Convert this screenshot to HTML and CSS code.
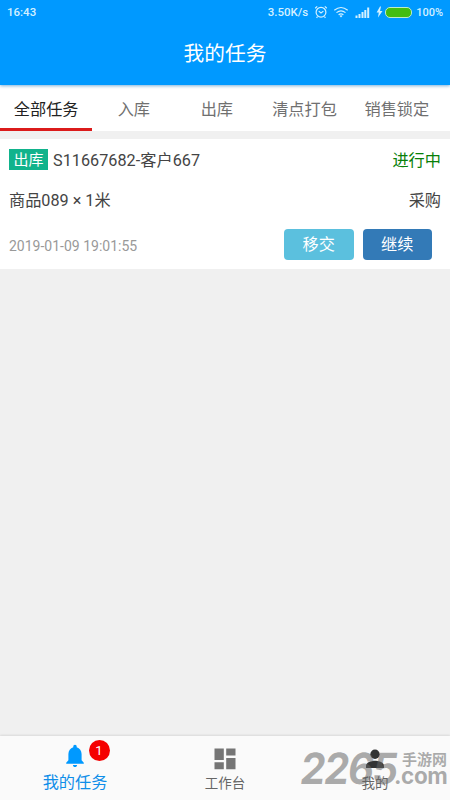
FILE: index.html
```html
<!DOCTYPE html>
<html lang="zh-CN">
<head>
<meta charset="utf-8">
<title>我的任务</title>
<link rel="stylesheet" href="styles.css">
</head>
<body>
<div class="app">
  <header class="header">
    <div class="status">
      <span class="clock">16:43</span>
      <span class="speed">3.50K/s</span>
      <svg class="alarm" width="14" height="14" viewBox="0 0 14 14"><circle cx="7" cy="7.2" r="4.9"/><path d="M1.2 3.2 3.2 1.4M12.8 3.2 10.8 1.4M4.7 6.1 7 8 9.4 6.1M3.5 11.5 2.6 12.8M10.5 11.5l.9 1.3"/></svg>
      <svg class="wifi" width="16" height="12" viewBox="0 0 16 12"><path d="M1.3 4.2Q8-1.2 14.7 4.2M3.5 6.6Q8 3 12.5 6.6M5.6 8.8Q8 7 10.4 8.8"/><path class="solid" d="M6.5 9.7Q8 8.8 9.5 9.7L8 11.4Z"/></svg>
      <svg class="signal" width="15" height="11" viewBox="0 0 15 11"><path d="M.5 8.5h2V11h-2zM3.5 7h2v4h-2zM6.5 5h2v6h-2zM9.3 3h2v8h-2zM12.2.5h2V11h-2z"/></svg>
      <svg class="bolt" width="7" height="12" viewBox="0 0 7 12"><path d="M4 .5.6 6.6h2.2L2 11.5l4.5-6.6H4L5 .5z"/></svg>
      <span class="battery"></span>
      <span class="percent">100%</span>
    </div>
    <h1 class="title">我的任务</h1>
  </header>
  <nav class="tabs">
    <a class="tab active">全部任务</a>
    <a class="tab">入库</a>
    <a class="tab">出库</a>
    <a class="tab">清点打包</a>
    <a class="tab">销售锁定</a>
  </nav>
  <main class="content">
    <article class="card">
      <div class="row order">
        <span class="name"><span class="tag">出库</span>S11667682-客户667</span>
        <span class="state">进行中</span>
      </div>
      <div class="row goods"><span>商品089 × 1米</span><span>采购</span></div>
      <div class="row foot">
        <time class="time">2019-01-09 19:01:55</time>
        <div class="actions"><button class="btn transfer">移交</button><button class="btn resume">继续</button></div>
      </div>
    </article>
  </main>
  <footer class="bottom">
    <a class="item current">
      <span class="icon"><svg width="20" height="24" viewBox="0 0 20 24"><path d="M10 .7c1 0 1.700.8 1.700 1.800v.7c3 .8 4.900 3.400 4.900 6.800v6.200l2.200 2.500v1H1.200v-1l2.200-2.500V10c0-3.400 1.900-6 4.900-6.800v-.7C8.300 1.500 9 .7 10 .7zM7.900 21h4.200c0 1.200-.9 2.100-2.100 2.100S7.900 22.200 7.900 21z"/></svg><span class="badge">1</span></span>
      <span class="label">我的任务</span>
    </a>
    <a class="item">
      <span class="icon"><svg width="22" height="22" viewBox="0 0 22 22"><path d="M.5.5h9.300v11.400H.5zM12.200.5h9.300v7H12.200zM.5 14.300h9.300v7H.5zM12.200 9.900h9.300v11.400H12.200z"/></svg></span>
      <span class="label">工作台</span>
    </a>
    <a class="item">
      <span class="icon"><svg width="20" height="20" viewBox="0 0 20 20"><circle cx="10" cy="5.300" r="4.700"/><path d="M1 19v-2.500c0-3 5.500-4.700 9-4.700s9 1.700 9 4.700V19z"/></svg></span>
      <span class="label">我的</span>
    </a>
    <div class="watermark"><span class="digits">2265</span><span class="site">手游网</span><span class="domain">.com</span></div>
  </footer>
</div>
</body>
</html>
```

FILE: styles.css
```css
* { box-sizing: border-box; }
body { margin: 0; font-family: Roboto, "Noto Sans CJK SC", sans-serif; color: #444; }
.app { width: 450px; height: 800px; display: flex; flex-direction: column; background: #f0f0f0; overflow: hidden; }
.header { height: 85px; flex: none; background: #0099ff; color: #fff; box-shadow: 0 1px 3px rgba(0,100,180,.5); position: relative; }
.status { height: 24px; display: flex; align-items: center; padding: 0 7px; font-size: 11px; font-weight: 500; color: #d3f0ff; }
.clock { font-size: 11.5px; }
.speed { margin-left: auto; font-size: 11.5px; }
.status svg { fill: none; stroke: #d3f0ff; stroke-width: 1.2; flex: none; }
.status .signal, .status .bolt, .status .solid { fill: #d3f0ff; stroke: none; }
.alarm { margin-left: 6px; }
.wifi { margin-left: 5px; }
.signal { margin-left: 6px; }
.bolt { margin-left: 6px; }
.battery { width: 27px; height: 11px; margin: 0 4px 0 2px; border: 1px solid #bdebc8; border-radius: 5px; background: #43bd12; flex: none; }
.title { margin: 0; height: 60px; line-height: 60px; font-size: 20.7px; font-weight: 400; text-align: center; }
.tabs { height: 46px; flex: none; display: flex; background: #fff; font-size: 16.2px; color: #707070; }
.tab { line-height: 49px; padding: 0 13.8px; min-width: 83px; flex: none; text-align: center; white-space: nowrap; height: 46px; }
.tab.active { color: #222; border-bottom: 3px solid #db1b1b; }
.content { flex: 1; padding-top: 8px; }
.card { height: 130px; padding: 0 9px; background: #fff; font-size: 16.2px; }
.row { display: flex; justify-content: space-between; align-items: center; }
.order { height: 40px; }
.name { display: flex; align-items: center; letter-spacing: .04px; }
.tag { width: 39px; height: 21px; margin-right: 5px; line-height: 22px; background: #11b38c; color: #fff; font-size: 15px; text-align: center; }
.state { color: #088008; }
.goods { height: 40px; }
.foot { height: 50px; }
.time { font-size: 14px; color: #999; padding-top: 3px; }
.actions { display: flex; gap: 9px; padding-right: 9px; }
.btn { width: 69.5px; height: 31px; padding: 0; border: 0; border-radius: 4px; color: #fff; font: 16.2px/32px Roboto, "Noto Sans CJK SC", sans-serif; }
.transfer { background: #5bc0de; }
.resume { background: #337ab7; }
.bottom { height: 64px; flex: none; display: flex; position: relative; background: #fafafa; box-shadow: 0 -1px 2px rgba(0,0,0,.1); }
.item { flex: 1; display: flex; flex-direction: column; align-items: center; color: #666; font-size: 13.5px; }
.icon { position: relative; height: 34px; padding-top: 8px; display: flex; align-items: center; justify-content: center; margin-top: 2px; }
.icon svg { fill: #757575; }
.label { line-height: 20px; margin-top: 1px; }
.current { color: #108ee9; font-size: 16.2px; }
.current .icon svg { fill: #0099ff; margin-top: -6px; }
.item:nth-child(3) svg { fill: #333; }
.badge { position: absolute; left: 23.5px; top: 2px; width: 21px; height: 21px; border-radius: 50%; background: #f50000; color: #fff; font-size: 13px; line-height: 21px; text-align: center; }
.watermark { position: absolute; left: 300px; top: 12px; width: 150px; height: 42px; color: rgba(100,100,100,.53); font-family: Inter, "Noto Sans CJK SC", sans-serif; font-weight: 700; white-space: nowrap; }
.digits { position: absolute; left: -2px; top: -1px; font-size: 43px; line-height: 42px; letter-spacing: -1.5px; transform: skewX(-8deg) scaleX(.93); transform-origin: left bottom; }
.site { position: absolute; left: 102px; top: 4px; font-size: 15px; line-height: 16px; }
.domain { position: absolute; left: 94px; top: 19px; font-size: 22.5px; line-height: 18px; letter-spacing: -.4px; }
```
